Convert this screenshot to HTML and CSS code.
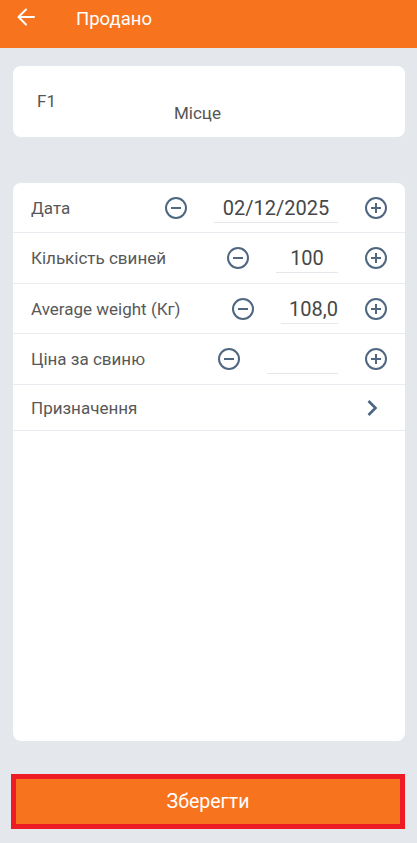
FILE: index.html
```html
<!DOCTYPE html>
<html lang="uk">
<head>
    <meta charset="UTF-8">
    <meta name="viewport" content="width=device-width, initial-scale=1.0">
    <title>Продано</title>
    <link rel="stylesheet" href="styles.css">
</head>
<body>

    <!-- Верхня панель -->
    <div class="top-bar">
        <span class="back-btn">
            <svg width="20" height="20" viewBox="0 0 20 20"><path d="M18 10H3M10 2.5L2.5 10L10 17.5" fill="none" stroke="#fff" stroke-width="2" stroke-linecap="round" stroke-linejoin="round"/></svg>
        </span>
        <span class="top-title">Продано</span>
    </div>

    <div class="content">
        <!-- Місце -->
        <div class="card place-card">
            <span class="place-code">F1</span>
            <span class="place-label">Місце</span>
        </div>

        <!-- Форма -->
        <div class="card form-card">
            <div class="form-row">
                <span class="row-label">Дата</span>
                <span class="step-btn">
                    <svg width="24" height="24" viewBox="0 0 24 24"><circle cx="12" cy="12" r="10" fill="none" stroke="#4f6780" stroke-width="2"/><path d="M7 12h10" stroke="#4f6780" stroke-width="2"/></svg>
                </span>
                <span class="row-value value-date">02/12/2025</span>
                <span class="step-btn">
                    <svg width="24" height="24" viewBox="0 0 24 24"><circle cx="12" cy="12" r="10" fill="none" stroke="#4f6780" stroke-width="2"/><path d="M7 12h10M12 7v10" stroke="#4f6780" stroke-width="2"/></svg>
                </span>
            </div>
            <div class="form-row">
                <span class="row-label">Кількість свиней</span>
                <span class="step-btn">
                    <svg width="24" height="24" viewBox="0 0 24 24"><circle cx="12" cy="12" r="10" fill="none" stroke="#4f6780" stroke-width="2"/><path d="M7 12h10" stroke="#4f6780" stroke-width="2"/></svg>
                </span>
                <span class="row-value value-count">100</span>
                <span class="step-btn">
                    <svg width="24" height="24" viewBox="0 0 24 24"><circle cx="12" cy="12" r="10" fill="none" stroke="#4f6780" stroke-width="2"/><path d="M7 12h10M12 7v10" stroke="#4f6780" stroke-width="2"/></svg>
                </span>
            </div>
            <div class="form-row">
                <span class="row-label">Average weight (Кг)</span>
                <span class="step-btn">
                    <svg width="24" height="24" viewBox="0 0 24 24"><circle cx="12" cy="12" r="10" fill="none" stroke="#4f6780" stroke-width="2"/><path d="M7 12h10" stroke="#4f6780" stroke-width="2"/></svg>
                </span>
                <span class="row-value value-weight">108,0</span>
                <span class="step-btn">
                    <svg width="24" height="24" viewBox="0 0 24 24"><circle cx="12" cy="12" r="10" fill="none" stroke="#4f6780" stroke-width="2"/><path d="M7 12h10M12 7v10" stroke="#4f6780" stroke-width="2"/></svg>
                </span>
            </div>
            <div class="form-row">
                <span class="row-label">Ціна за свиню</span>
                <span class="step-btn">
                    <svg width="24" height="24" viewBox="0 0 24 24"><circle cx="12" cy="12" r="10" fill="none" stroke="#4f6780" stroke-width="2"/><path d="M7 12h10" stroke="#4f6780" stroke-width="2"/></svg>
                </span>
                <span class="row-value value-price"></span>
                <span class="step-btn">
                    <svg width="24" height="24" viewBox="0 0 24 24"><circle cx="12" cy="12" r="10" fill="none" stroke="#4f6780" stroke-width="2"/><path d="M7 12h10M12 7v10" stroke="#4f6780" stroke-width="2"/></svg>
                </span>
            </div>
            <div class="form-row row-link">
                <span class="row-label">Призначення</span>
                <span class="chevron">
                    <svg width="12" height="18" viewBox="0 0 12 18"><path d="M2.5 2L9.5 9L2.5 16" fill="none" stroke="#4b6480" stroke-width="2.6"/></svg>
                </span>
            </div>
        </div>

        <!-- Кнопка -->
        <div class="save-btn">Зберегти</div>
    </div>

</body>
</html>
```

FILE: styles.css
```css
body {
    font-family: Roboto, "Noto Sans", Arial, sans-serif;
    background-color: #e4e8ed;
    margin: 0;
    color: #555;
}

/* Верхня панель */
.top-bar {
    height: 48px;
    box-sizing: border-box;
    padding: 0 0 10px 16px;
    background-color: #f8731e;
    display: flex;
    align-items: center;
    color: #fff;
}

.back-btn {
    display: flex;
    width: 20px;
    height: 20px;
    margin-top: -4px;
}

.top-title {
    margin-left: 40px;
    font-size: 18.5px;
}

.content {
    padding: 18px 12px 0 13px;
}

.card {
    background-color: #fff;
    border-radius: 8px;
}

/* Місце */
.place-card {
    height: 71px;
    box-sizing: border-box;
    display: flex;
    align-items: flex-start;
    padding: 25px 24px 0 24px;
    font-size: 17px;
}

.place-code {
    color: #555;
}

.place-label {
    margin-left: 118px;
    margin-top: 12px;
    color: #555;
}

/* Форма */
.form-card {
    margin-top: 46px;
    height: 558px;
    overflow: hidden;
}

.form-row {
    height: 50px;
    box-sizing: border-box;
    display: flex;
    align-items: center;
    padding: 0 17px 0 18px;
    border-bottom: 1px solid #e8ecf0;
}

.form-row:nth-child(2),
.form-row:nth-child(4) {
    height: 51px;
}

.row-link {
    height: 46px;
}

.row-label {
    flex: 1;
    font-size: 17px;
    color: #585858;
}

.step-btn {
    display: flex;
    width: 24px;
    height: 24px;
}

.row-value {
    height: 30px;
    margin: 0 26px 0 26px;
    box-sizing: border-box;
    border-bottom: 1px solid #e4e8ec;
    font-size: 20px;
    line-height: 30px;
    text-align: center;
    color: #474747;
}

.value-date { width: 124px; }
.value-count { width: 62px; }
.value-weight { width: 57px; text-align: right; }
.value-price { width: 71px; }

.chevron {
    display: flex;
    margin-right: 10px;
}

/* Кнопка */
.save-btn {
    margin: 33px 0 0 -2px;
    height: 55px;
    box-sizing: border-box;
    border: 5px solid #ed1c24;
    background-color: #f8731e;
    color: #fff;
    font-size: 19.5px;
    display: flex;
    align-items: center;
    justify-content: center;
}
```
